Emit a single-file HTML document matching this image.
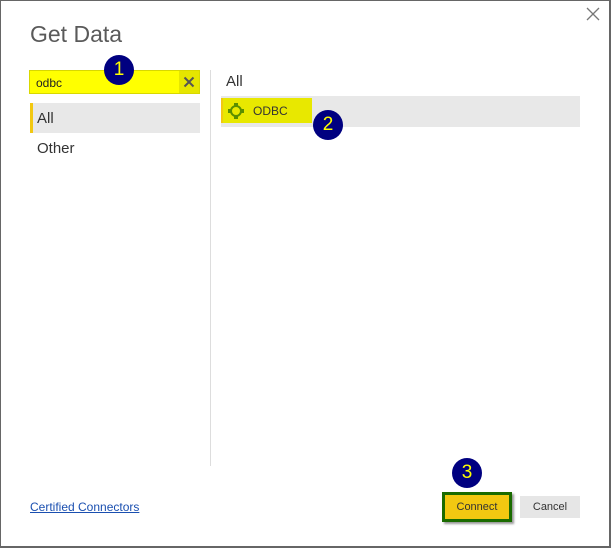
<!DOCTYPE html>
<html><head><style>
*{margin:0;padding:0;box-sizing:border-box}
body{width:611px;height:548px;background:#fff;font-family:"Liberation Sans",sans-serif;position:relative;overflow:hidden}
.frame{position:absolute;left:0;top:0;width:611px;height:548px;border:1px solid #666;border-bottom-width:2px;border-right-width:2px}
.a{position:absolute}
.circ{position:absolute;width:30px;height:30px;border-radius:50%;background:#000080;color:#ffff00;font-size:19px;text-align:center;line-height:30px}
</style></head><body>
<div class="frame"></div>
<svg class="a" style="left:586px;top:7px" width="14" height="14"><path d="M1 1L13 13M13 1L1 13" stroke="#777" stroke-width="1.3"/></svg>
<div class="a" style="left:30px;top:21px;font-size:23px;color:#5a5a5a">Get Data</div>
<div class="a" style="left:29px;top:70px;width:171px;height:24px;background:#ffff00;border:1px solid #d8d800"></div>
<div class="a" style="left:179px;top:71px;width:20px;height:22px;background:#e6e600"></div>
<svg class="a" style="left:183px;top:76px" width="12" height="12"><path d="M1.5 1.5L10.5 10.5M10.5 1.5L1.5 10.5" stroke="#555" stroke-width="2"/></svg>
<div class="a" style="left:36px;top:76px;font-size:12px;color:#222">odbc</div>
<div class="circ" style="left:104px;top:55px">1</div>
<div class="a" style="left:30px;top:103px;width:170px;height:30px;background:#e8e8e8;border-left:3px solid #f2c811"></div>
<div class="a" style="left:37px;top:110px;font-size:15px;color:#333">All</div>
<div class="a" style="left:37px;top:140px;font-size:15px;color:#333">Other</div>
<div class="a" style="left:210px;top:70px;width:1px;height:396px;background:#ddd"></div>
<div class="a" style="left:226px;top:73px;font-size:15px;color:#333">All</div>
<div class="a" style="left:221px;top:96px;width:359px;height:31px;background:#e8e8e8"></div>
<div class="a" style="left:221px;top:98px;width:91px;height:25px;background:#e8e800;border-left:2px solid #f2c811"></div>
<svg class="a" style="left:227px;top:102px" width="18" height="18"><circle cx="9" cy="9" r="5" fill="none" stroke="#5a8f00" stroke-width="2"/><rect x="7" y="1" width="4" height="4" fill="#5a8f00"/><rect x="7" y="13" width="4" height="4" fill="#5a8f00"/><rect x="1" y="7" width="4" height="4" fill="#5a8f00"/><rect x="13" y="7" width="4" height="4" fill="#5a8f00"/></svg>
<div class="a" style="left:253px;top:104px;font-size:12px;color:#333">ODBC</div>
<div class="circ" style="left:313px;top:110px">2</div>
<div class="a" style="left:30px;top:500px;font-size:12px;color:#1a4fb0;text-decoration:underline">Certified Connectors</div>
<div class="circ" style="left:452px;top:458px">3</div>
<div class="a" style="left:442px;top:492px;width:70px;height:30px;border:3px solid #1a6b00;background:#f2c811;box-shadow:2px 2px 2px #999"></div>
<div class="a" style="left:442px;top:501px;width:70px;text-align:center;font-size:11px;color:#333">Connect</div>
<div class="a" style="left:520px;top:496px;width:60px;height:22px;background:#e6e6e6;text-align:center;font-size:11px;line-height:22px;color:#333">Cancel</div>
</body></html>
